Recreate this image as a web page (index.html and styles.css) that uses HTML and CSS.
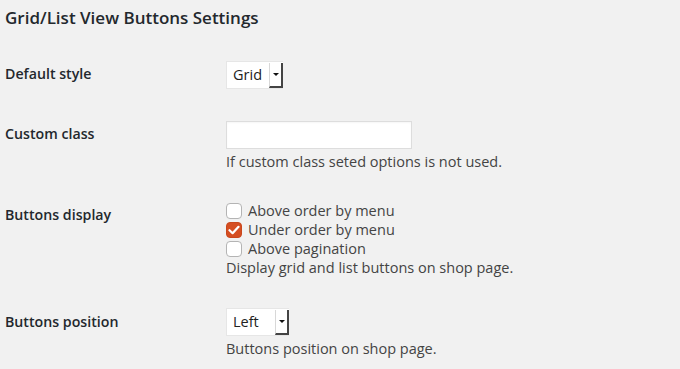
FILE: index.html
```html
<!DOCTYPE html>
<html><head>
    <meta charset="UTF-8">
    <title>Grid/List View Buttons Settings</title>
    <link rel="stylesheet" href="styles.css">
</head>
<body>
    <h2 class="section-title">Grid/List View Buttons Settings</h2>
    <div class="form-table">
        <div class="row row-style">
            <div class="label">Default style</div>
            <div class="field">
                <div class="select select-style">
                    <span class="select-value">Grid</span>
                    <span class="select-arrow"></span>
                </div>
            </div>
        </div>
        <div class="row row-class">
            <div class="label">Custom class</div>
            <div class="field">
                <input type="text" class="text-input">
                <p class="description">If custom class seted options is not used.</p>
            </div>
        </div>
        <div class="row row-display">
            <div class="label">Buttons display</div>
            <div class="field">
                <label class="check"><span class="box"></span>Above order by menu</label>
                <label class="check"><span class="box checked">
                    <svg width="12" height="10" viewBox="0 0 12 10"><path d="M1.5 5.2 L4.6 8.2 L10.5 1.8" fill="none" stroke="#fff" stroke-width="2.2" stroke-linecap="round" stroke-linejoin="round"/></svg>
                </span>Under order by menu</label>
                <label class="check"><span class="box"></span>Above pagination</label>
                <p class="description">Display grid and list buttons on shop page.</p>
            </div>
        </div>
        <div class="row row-position">
            <div class="label">Buttons position</div>
            <div class="field">
                <div class="select select-position">
                    <span class="select-value">Left</span>
                    <span class="select-arrow"></span>
                </div>
                <p class="description">Buttons position on shop page.</p>
            </div>
        </div>
    </div>
</body>
</html>
```

FILE: styles.css
```css
body {
    font-family: 'Open Sans', 'Noto Sans', sans-serif;
    margin: 0;
    padding: 0 5px;
    background-color: #f1f1f1;
    color: #444;
    font-size: 14.5px;
}
.section-title {
    font-size: 17px;
    font-weight: 600;
    color: #23282d;
    margin: 7px 0 0;
    line-height: 22px;
}
.row {
    display: grid;
    grid-template-columns: 221px 1fr;
}
.label {
    font-weight: 600;
    font-size: 14.2px;
    color: #23282d;
    line-height: 20px;
}
.row-style { margin-top: 32px; }
.row-style .label { padding-top: 3px; }
.row-class { margin-top: 32px; }
.row-class .label { padding-top: 3px; }
.row-display { margin-top: 29px; }
.row-display .label { padding-top: 4px; }
.row-position { margin-top: 30px; }
.row-position .label { padding-top: 4px; }
.select {
    display: flex;
    align-items: stretch;
    background: #fff;
    border: 1px solid #e6e6e6;
    border-right: none;
    box-sizing: border-box;
}
.select-style { width: 57px; height: 28px; }
.select-position { width: 63px; height: 28px; }
.select-value {
    flex: 1;
    padding-left: 6px;
    line-height: 26px;
    color: #222;
}
.select-arrow {
    width: 11px;
    margin: 1px 0 0;
    background: #fff;
    border-left: 1px solid #d8d8d8;
    border-right: 2px solid #444;
    border-bottom: 2px solid #444;
    position: relative;
}
.select-arrow::after {
    content: "";
    position: absolute;
    left: 3px;
    top: 10px;
    border-left: 3px solid transparent;
    border-right: 3px solid transparent;
    border-top: 3px solid #111;
}
.text-input {
    display: block;
    width: 186px;
    height: 28px;
    margin: 0;
    border: 1px solid #ddd;
    background: #fff;
    box-sizing: border-box;
    box-shadow: inset 0 1px 2px rgba(0,0,0,0.04);
}
.description {
    margin: 3px 0 0;
    line-height: 20px;
    color: #444;
}
.check {
    display: flex;
    align-items: center;
    height: 19px;
    color: #444;
}
.box {
    width: 14px;
    height: 14px;
    border: 1px solid #b4b4b4;
    border-radius: 4px;
    background: #fff;
    margin-right: 6px;
    display: flex;
    align-items: center;
    justify-content: center;
}
.box.checked {
    background: #d54e21;
    border-color: #c9471c;
}
.row-display .description { margin-top: 0; }
```
